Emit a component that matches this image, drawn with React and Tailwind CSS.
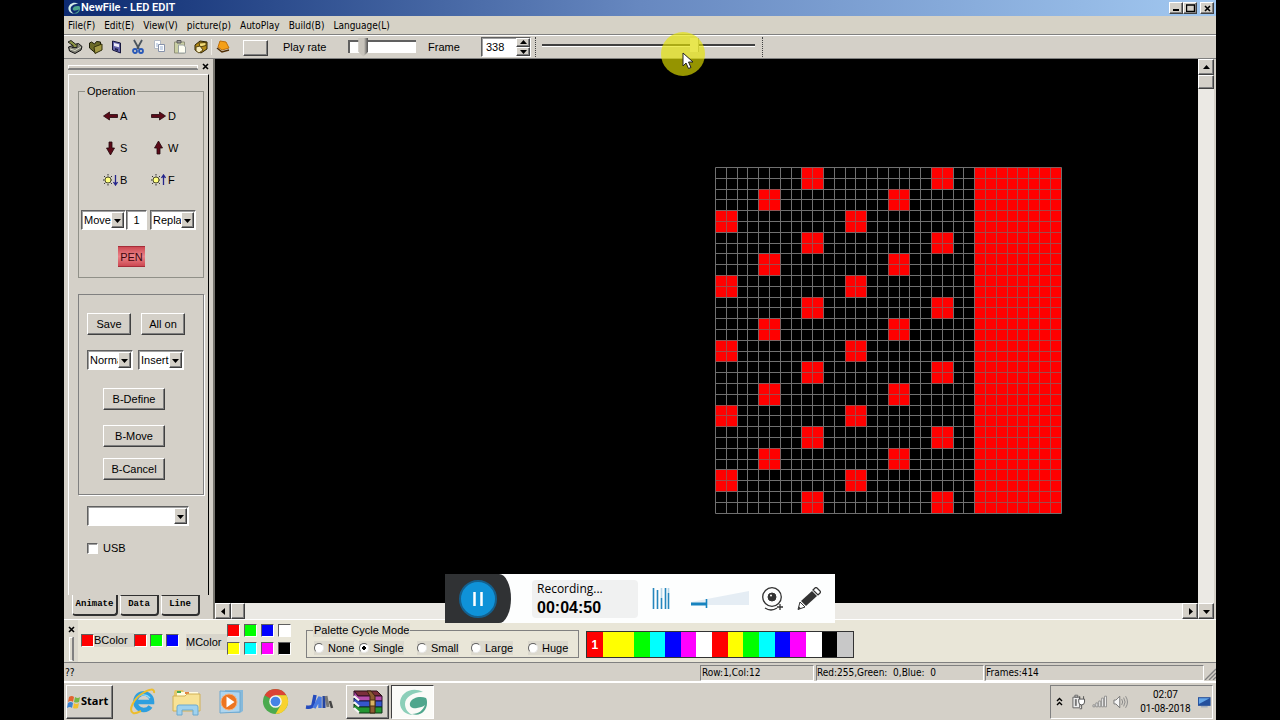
import { useState } from 'react';

const RAISED = 'bg-[#d4d0c8] border border-t-white border-l-white border-r-[#404040] border-b-[#404040] shadow-[inset_-1px_-1px_#808080]';
const SUNKEN = 'bg-white border border-t-[#606060] border-l-[#606060] border-r-white border-b-white shadow-[inset_1px_1px_#a0a0a0]';
const GROUP = 'border border-[#808080] shadow-[1px_1px_#ffffff]';
const ARIAL = "font-['Liberation_Sans',sans-serif]";
const TAHOMA = "font-['DejaVu_Sans_Condensed','DejaVu_Sans',sans-serif]";

const MENUS = ['File(F)', 'Edit(E)', 'View(V)', 'picture(p)', 'AutoPlay', 'Build(B)', 'Language(L)'];

const M_COLORS = [
  ['Mix red', 'bg-[#ff0000]'],
  ['Mix green', 'bg-[#00ff00]'],
  ['Mix blue', 'bg-[#0000ff]'],
  ['Mix white', 'bg-white'],
  ['Mix yellow', 'bg-[#ffff00]'],
  ['Mix cyan', 'bg-[#00ffff]'],
  ['Mix magenta', 'bg-[#ff00ff]'],
  ['Mix black', 'bg-black'],
];

const PALETTE = [
  'bg-[#ff0000]', 'bg-[#ffff00]', 'bg-[#ffff00]', 'bg-[#00ff00]', 'bg-[#00ffff]', 'bg-[#0000ff]',
  'bg-[#ff00ff]', 'bg-white', 'bg-[#ff0000]', 'bg-[#ffff00]', 'bg-[#00ff00]', 'bg-[#00ffff]',
  'bg-[#0000ff]', 'bg-[#ff00ff]', 'bg-white', 'bg-black', 'bg-[#c8c8c8]',
];

const CYCLE_MODES = ['None', 'Single', 'Small', 'Large', 'Huge'];

function Triangle({ dir = 'down' }) {
  const d = {
    down: 'M1 3h7l-3.5 4z',
    up: 'M1 6h7L4.5 2z',
    left: 'M6 1v7L2 4.5z',
    right: 'M3 1v7l4-3.5z',
  }[dir];
  return (
    <svg width="9" height="9" viewBox="0 0 9 9">
      <path d={d} fill="#000" />
    </svg>
  );
}

function Cross() {
  return (
    <svg width="7" height="7" viewBox="0 0 7 7">
      <path d="M1 1l5 5M6 1L1 6" stroke="#000" strokeWidth="1.6" />
    </svg>
  );
}

function Select({ label, options, className }) {
  return (
    <div className={`relative h-5 ${SUNKEN} ${className}`}>
      <select aria-label={label} className="block h-full w-full appearance-none overflow-hidden bg-transparent pl-0.5 pr-3 text-[11px] leading-4 text-black outline-none">
        {options.map((option) => (
          <option key={option}>{option}</option>
        ))}
      </select>
      <span className={`pointer-events-none absolute inset-y-px right-px flex w-[13px] items-center justify-center ${RAISED}`}>
        <Triangle />
      </span>
    </div>
  );
}

function PushButton({ children, className }) {
  return (
    <button type="button" className={`flex h-[22px] items-center justify-center text-[11px] ${RAISED} ${className}`}>
      {children}
    </button>
  );
}

/* ---------- toolbar icons ---------- */

const TOOL_ICONS = [
  {
    name: 'New',
    art: (
      <>
        <path d="M1.5 8l10-3.500 3.500 3-1 3.500-6 3.500-5.500-2.500z" fill="#85857a" stroke="#111" />
        <path d="M3 10l5 1.500 6-3.500" stroke="#dadac8" fill="none" />
        <path d="M1 3l3-1.500 5 4 1-1v4H5l1.500-1.500z" fill="#8b9344" stroke="#222" />
      </>
    ),
  },
  {
    name: 'Open',
    art: (
      <>
        <path d="M1.5 4l2-1 3 2 2-2.500 4 .5v3l-5 8-6-5z" fill="#6c6a28" stroke="#1c1c08" />
        <path d="M6 8l8-3v6l-7 3.500z" fill="#a39a45" stroke="#33310c" />
      </>
    ),
  },
  {
    name: 'Save file',
    art: (
      <>
        <path d="M3.5 2l8 2v10l-8-3z" fill="#6262a8" stroke="#16163c" />
        <path d="M5 4l5 1.200v3L5 7z" fill="#eceaf6" />
        <path d="M6 9l3 1v2L6 11z" fill="#20204d" />
      </>
    ),
  },
  {
    name: 'Cut',
    art: (
      <>
        <path d="M4 1l5 9M12 1L7 10" stroke="#4a545e" strokeWidth="1.8" />
        <circle cx="5" cy="12" r="2" fill="none" stroke="#2858b8" strokeWidth="1.8" />
        <circle cx="11" cy="12" r="2" fill="none" stroke="#2858b8" strokeWidth="1.8" />
      </>
    ),
  },
  {
    name: 'Copy',
    art: (
      <>
        <path d="M3.5 1.500h6v8h-6z" fill="#fff" stroke="#b4bac4" />
        <path d="M7.500 5.500h6v7h-6z" fill="#fff" stroke="#8792aa" />
        <path d="M9 8h3M9 10h3M5 5h2M5 7h2" stroke="#9cb3d5" />
      </>
    ),
  },
  {
    name: 'Paste',
    art: (
      <>
        <path d="M2.5 3h10v11h-10z" fill="#cbd0a4" stroke="#92927a" />
        <path d="M5 1.500h4v2.500H5z" fill="#999" stroke="#5b5b5b" />
        <path d="M6.500 6h5l2 2v6h-7z" fill="#fffff2" stroke="#9aa2a2" />
      </>
    ),
  },
  {
    name: 'Paste frame',
    art: (
      <>
        <path d="M2 6l5-4 7 1v7l-6 4-6-3z" fill="#b58b17" stroke="#2b2105" />
        <path d="M6 4l7-.5v3l-6 1.500z" fill="#f4dc78" stroke="#533f06" />
        <path d="M3 8l4-1 3 4-4 3-3-2z" fill="#f6ecc0" stroke="#5a4814" />
      </>
    ),
  },
];

/* ---------- taskbar icons ---------- */

function InternetExplorerIcon() {
  return (
    <svg width="28" height="28" viewBox="0 0 28 28" fill="none">
      <path d="M21.5 18.500a8.300 8.300 0 1 1 1.500-4.500H8" stroke="#2e9fdf" strokeWidth="4.600" />
      <path d="M21 10a8.500 8.500 0 0 0-14 1" stroke="#8fdcf8" strokeWidth="1.300" />
      <path d="M4 25c-5-3 1-15 10-20C20 1 26 0 25 5M4 25c3 1 6-1 8-2" stroke="#edbd2c" strokeWidth="2" />
    </svg>
  );
}

function ExplorerIcon() {
  return (
    <svg width="30" height="28" viewBox="0 0 30 28">
      <path d="M2 4l1-2h8l1 2h14v19H2z" fill="#e4c66a" />
      <path d="M5 4h21v6H5z" fill="#fffbe0" />
      <path d="M5 3h4v2H5z" fill="#45a851" />
      <path d="M13 4h4v2h-4z" fill="#e48440" />
      <path d="M1 8h12l2-2h13v17H1z" fill="#f7e296" stroke="#d1b054" />
      <path d="M5 27v-8q0-2 2-2h17q2 0 2 2v8h-5v-5h-11v5z" fill="#9fd2ee" stroke="#6aa9d0" />
    </svg>
  );
}

function MediaPlayerIcon() {
  return (
    <svg width="28" height="28" viewBox="0 0 28 28">
      <path d="M8 2h18v21l-3 2H8z" fill="#86b9da" />
      <path d="M3 3l20 1v20l-20 1z" fill="#aed5ee" stroke="#6fa9d0" />
      <circle cx="12" cy="14" r="8" fill="#ed7521" stroke="#f5b27d" />
      <path d="M9.500 8.500v11l8-5.500z" fill="#fff" />
    </svg>
  );
}

function ChromeIcon() {
  return (
    <svg width="27" height="27" viewBox="0 0 28 28">
      <circle cx="14" cy="14" r="13" fill="#4baa4e" />
      <path d="M14 14L2.700 7.500A13 13 0 0 1 25.300 7.500H14z" fill="#dc4335" />
      <path d="M14 7.500h11.300A13 13 0 0 1 14 27l5.500-9.500z" fill="#f8d22f" />
      <circle cx="14" cy="14" r="6.500" fill="#f5f5f0" />
      <circle cx="14" cy="14" r="5" fill="#4584e6" />
    </svg>
  );
}

function JmIcon() {
  return (
    <svg width="30" height="18" viewBox="0 0 30 18" fill="none">
      <path d="M11 2L9 12q-1 3-7 2" stroke="#254bbd" strokeWidth="3.500" />
      <path d="M10 15l6-11v11" stroke="#4879e0" strokeWidth="3.500" />
      <path d="M20 3v12" stroke="#2444a0" strokeWidth="3" />
      <path d="M22 3l2 11" stroke="#777" strokeWidth="3" />
      <path d="M26 8l2 7" stroke="#444" strokeWidth="2.500" />
    </svg>
  );
}

function WinrarIcon() {
  return (
    <svg width="30" height="24" viewBox="0 0 30 24">
      <path d="M1 1h23l5 5H5z" fill="#7b2f3c" stroke="#2b0f14" />
      <path d="M5 6h24v5H6l-5-5V1z" fill="#b64eab" stroke="#32102a" />
      <path d="M5 11h24v6H6l-5-5V8z" fill="#3656cd" stroke="#111c50" />
      <path d="M5 17h24v6H6l-5-5v-4z" fill="#239532" stroke="#0f3516" />
      <path d="M1 6l5 4.500M1 12l5 4.500M1 18l5 4.500" stroke="#f4f4f4" strokeWidth="2" />
      <path d="M14 1h4l4 5v17h-5V6z" fill="#8d5c32" stroke="#3b2411" />
      <path d="M17 10h5v6h-5z" fill="#d8b465" stroke="#4c3210" />
    </svg>
  );
}

function SwirlIcon({ size = 28, arc = '#8ccfb9' }) {
  return (
    <svg width={size} height={size} viewBox="0 0 28 28">
      <path d="M24 4C14-2 1 4 1 15c0 7 6 12 13 12-5-2-8-6-8-11C6 9 14 4 24 4z" fill={arc} />
      <path d="M27 10c-5-2-14-1-16 5-1 4 3 6 7 5 3-1 6-1 8-3-2 5-6 9-13 9 8 3 15-3 15-11 0-2 0-3-1-5z" fill="#4fa68d" />
    </svg>
  );
}

function WindowsFlag() {
  return (
    <svg width="14" height="14" viewBox="0 0 14 14">
      <path d="M2 2q3-2 5 0L6 7Q4 5 1 7z" fill="#e26430" />
      <path d="M8 2q3 2 5 0l-1 5q-3 1-5 0z" fill="#77b843" />
      <path d="M1 8q3-2 5 0l-1 5q-2-2-5 0z" fill="#3c82d1" />
      <path d="M7 8q2 2 5 0l-1 5q-3 1-5 0z" fill="#f2bf30" />
    </svg>
  );
}

/* ---------- window parts ---------- */

function TitleBar() {
  return (
    <header className="flex h-4 items-center bg-linear-to-r from-[#0d2a70] via-[#6788c0] to-[#a2c8f0] pl-1 pr-0.5">
      <SwirlIcon size={12} arc="#d6f0ea" />
      <h1 className="ml-px flex-1 text-[11px] font-semibold leading-4 text-white">NewFile - LED EDIT</h1>
      <button type="button" aria-label="Minimize" className={`flex h-3 w-3.5 items-end justify-center pb-0.5 ${RAISED}`}>
        <svg width="6" height="2"><path d="M0 0h6v2H0z" /></svg>
      </button>
      <button type="button" aria-label="Maximize" className={`flex h-3 w-3.5 items-center justify-center ${RAISED}`}>
        <svg width="9" height="8"><path d="M.5 1h8v6.500h-8z" fill="none" stroke="#000" strokeWidth="1.400" /></svg>
      </button>
      <button type="button" aria-label="Close" className={`ml-[3px] flex h-3 w-3.5 items-center justify-center ${RAISED}`}>
        <Cross />
      </button>
    </header>
  );
}

function MenuBar() {
  return (
    <nav className={`flex h-[19px] items-center gap-[9px] border-b border-[#808080] bg-[#d6d2c6] pl-1 pt-px text-[10px] ${TAHOMA}`}>
      {MENUS.map((menu) => (
        <button key={menu} type="button" className="leading-4">{menu}</button>
      ))}
    </nav>
  );
}

function ToolBar() {
  const [rate, setRate] = useState(10);
  const [frame, setFrame] = useState(338);

  return (
    <div className={`relative flex h-6 items-center border-t border-white border-b border-b-[#808080] bg-[#d4d0c8] text-[11px] ${ARIAL}`}>
      {TOOL_ICONS.map((tool) => (
        <button key={tool.name} type="button" aria-label={tool.name} className="flex w-[21px] justify-center">
          <svg width="16" height="16" viewBox="0 0 16 16">{tool.art}</svg>
        </button>
      ))}
      <span className="h-4 w-px bg-[#eeece6]" />
      <button type="button" aria-label="Erase" className="flex w-[21px] justify-center">
        <svg width="16" height="16" viewBox="0 0 16 16">
          <path d="M5 2l6 1 3 6-7 2-4-3z" fill="#f5a018" stroke="#c0700a" />
          <path d="M2 9l5 4 7-2" fill="none" stroke="#4e2d05" strokeWidth="1.500" />
        </svg>
      </button>
      <button type="button" aria-label="Play" className={`ml-2.5 mt-0.5 h-4 w-[25px] ${RAISED}`} />
      <label htmlFor="rate" className="ml-[15px] w-[65px]">Play rate</label>
      <input
        id="rate"
        type="range"
        min="0"
        max="68"
        value={rate}
        onChange={(e) => setRate(Number(e.target.value))}
        className="mb-0.5 h-5 w-[68px] appearance-none bg-transparent [&::-webkit-slider-runnable-track]:h-[13px] [&::-webkit-slider-runnable-track]:border-t-2 [&::-webkit-slider-runnable-track]:border-l-2 [&::-webkit-slider-runnable-track]:border-[#606060] [&::-webkit-slider-runnable-track]:bg-white [&::-webkit-slider-thumb]:-mt-1 [&::-webkit-slider-thumb]:h-[19px] [&::-webkit-slider-thumb]:w-2.5 [&::-webkit-slider-thumb]:appearance-none [&::-webkit-slider-thumb]:bg-linear-to-r [&::-webkit-slider-thumb]:from-[#c8c4bc] [&::-webkit-slider-thumb]:from-60% [&::-webkit-slider-thumb]:to-[#505050] [&::-webkit-slider-thumb]:[clip-path:polygon(0_0,100%_0,100%_75%,50%_100%,0_75%)]"
      />
      <label htmlFor="frame" className="ml-3 w-[53px]">Frame</label>
      <div className={`flex h-5 w-[50px] ${SUNKEN}`}>
        <input
          id="frame"
          type="text"
          value={frame}
          onChange={(e) => setFrame(Number(e.target.value) || 0)}
          className="min-w-0 flex-1 bg-transparent pl-1 outline-none"
        />
        <span className="flex w-3.5 flex-col">
          <button type="button" aria-label="Next frame" onClick={() => setFrame(frame + 1)} className={`flex flex-1 items-center justify-center overflow-hidden ${RAISED}`}>
            <Triangle dir="up" />
          </button>
          <button type="button" aria-label="Previous frame" onClick={() => setFrame(frame - 1)} className={`flex flex-1 items-center justify-center overflow-hidden ${RAISED}`}>
            <Triangle />
          </button>
        </span>
      </div>
      <span className="ml-1 h-5 border-l border-dotted border-[#404040]" />
      <input
        type="range"
        aria-label="Frame position"
        min="0"
        max="465"
        value={frame}
        onChange={(e) => setFrame(Number(e.target.value))}
        className="mb-1 ml-1.5 h-4 w-[213px] appearance-none bg-transparent [&::-webkit-slider-runnable-track]:h-[3px] [&::-webkit-slider-runnable-track]:border-b [&::-webkit-slider-runnable-track]:border-white [&::-webkit-slider-runnable-track]:bg-[#404040] [&::-webkit-slider-thumb]:-mt-1.5 [&::-webkit-slider-thumb]:h-3.5 [&::-webkit-slider-thumb]:w-[9px] [&::-webkit-slider-thumb]:appearance-none [&::-webkit-slider-thumb]:border-r [&::-webkit-slider-thumb]:border-[#a0a098] [&::-webkit-slider-thumb]:bg-[#eeece4]"
      />
      <span className="ml-[7px] h-5 border-l border-dotted border-[#404040]" />

      {/* click highlight and pointer */}
      <div className="pointer-events-none absolute -top-1 left-[597px] z-10 size-11 rounded-full bg-[#e6e400]/65">
        <svg className="absolute left-[21px] top-5" width="13" height="18" viewBox="0 0 13 18">
          <path d="M1 1v13l3-3 2.500 5.500 2.500-1L6.500 10H11z" fill="#fff" stroke="#222" />
        </svg>
      </div>
    </div>
  );
}

function Arrow({ dir }) {
  const d = {
    left: 'M0 7l6-4v2.500h8v3H6V11z',
    right: 'M14 7L8 3v2.500H0v3h8V11z',
    down: 'M7 14L3 7h2.500V1h3v6H11z',
    up: 'M7 0l4 7H8.500v6h-3V7H3z',
  }[dir];
  return (
    <svg width="15" height="14" viewBox="0 0 14 14">
      <path d={d} fill="#5c0a18" stroke="#22080c" strokeWidth=".8" />
    </svg>
  );
}

function Sun({ dir }) {
  return (
    <svg width="15" height="12" viewBox="0 0 15 12">
      <path d="M5 0v12M0 6h10M1 2l8 8M9 2l-8 8" stroke="#333" strokeWidth="1" strokeDasharray="1.500 1" />
      <circle cx="5" cy="6" r="3" fill="#ffff80" stroke="#50502c" />
      <path d={dir === 'down' ? 'M12.500 1v9M10.500 8l2 3 2-3' : 'M12.500 11V2M10.500 4l2-3 2 3'} stroke="#25258c" strokeWidth="1.300" fill="none" />
    </svg>
  );
}

const OPERATIONS = [
  ['A', <Arrow dir="left" />],
  ['D', <Arrow dir="right" />],
  ['S', <Arrow dir="down" />],
  ['W', <Arrow dir="up" />],
  ['B', <Sun dir="down" />],
  ['F', <Sun dir="up" />],
];

function SidePanel() {
  return (
    <aside className={`flex w-[151px] shrink-0 flex-col border-r-2 border-[#77756f] bg-[#d4d0c8] text-[11px] ${ARIAL}`}>
      <div className="flex h-[15px] items-center gap-1 pl-1">
        <span className="h-1 w-[130px] border border-white border-b-[#808080] shadow-[0_1px_#808080]" />
        <button type="button" aria-label="Close panel"><Cross /></button>
      </div>

      <div className="ml-1 mr-1 flex-1 border-t border-l border-r border-t-white border-l-white border-r-black">
        <fieldset className="ml-[9px] mt-[9px] w-[126px] border border-[#909088] pb-2.5">
          <legend className="ml-1.5 px-0.5 leading-[14px]">Operation</legend>
          <div className="grid grid-cols-[48px_48px] pl-6 pt-0.5">
            {OPERATIONS.map(([key, icon]) => (
              <button key={key} type="button" className="flex h-8 items-center gap-0.5">
                {icon}
                {key}
              </button>
            ))}
          </div>
          <div className="mt-3.5 flex pl-0.5">
            <Select label="Operation type" options={['Move', 'Clear']} className="w-[45px]" />
            <input aria-label="Step" defaultValue="1" className={`h-5 w-[21px] text-center ${SUNKEN}`} />
            <Select label="Write mode" options={['Replace', 'Overlay']} className="ml-[3px] w-[46px]" />
          </div>
          <button type="button" className="ml-[39px] mt-4 block h-[21px] w-[27px] border-y border-[#a52c38] bg-linear-to-b from-[#cc4852] via-[#ec8289] to-[#cc4852] text-center leading-[18px] text-[#40060c]">
            PEN
          </button>
        </fieldset>

        <div className={`ml-[9px] mt-4 w-[126px] pb-3.5 pl-2 pt-[18px] ${GROUP}`}>
          <div className="flex gap-2.5">
            <PushButton className="w-11">Save</PushButton>
            <PushButton className="w-11">All on</PushButton>
          </div>
          <div className="mt-[15px] flex gap-[5px]">
            <Select label="Draw mode" options={['Normal', 'Mirror']} className="w-[46px]" />
            <Select label="Frame mode" options={['Insert', 'Append']} className="w-[46px]" />
          </div>
          <div className="ml-4 mt-[18px] flex w-[62px] flex-col">
            <PushButton>B-Define</PushButton>
            <PushButton className="mt-[15px]">B-Move</PushButton>
            <PushButton className="mt-[11px]">B-Cancel</PushButton>
          </div>
        </div>

        <Select label="Port" options={['']} className="ml-[18px] mt-[11px] w-[102px]" />
        <label className="ml-[18px] mt-3.5 flex items-center gap-[5px]">
          <input type="checkbox" className={`size-[11px] appearance-none ${SUNKEN}`} />
          USB
        </label>
      </div>

      <div className="flex h-6 items-start gap-0.5 pl-2 font-['Liberation_Mono',monospace] text-[9px]">
        <button type="button" className="h-[21px] w-[46px] rounded-b border-r-2 border-b-2 border-l border-[#303030] border-l-white font-bold">Animate</button>
        <button type="button" className="h-[21px] w-[39px] rounded-b border-t border-r-2 border-b-2 border-l border-[#303030] border-l-white font-bold">Data</button>
        <button type="button" className="h-[21px] w-[39px] rounded-b border-t border-r-2 border-b-2 border-l border-[#303030] border-l-white font-bold">Line</button>
      </div>
    </aside>
  );
}

// 32x32 dots; the last 8 columns are fully lit, the rest carries 2x2 blocks on a diagonal
function LedGrid() {
  const blocks = [];
  for (let row = 0; row < 16; row++) {
    const first = 4 - (row % 3) * 2;
    blocks.push([first, row], [first + 6, row]);
  }
  const lines = Array.from({ length: 33 }, (_, i) => Math.round(i * 10.8));
  const lit = (
    <>
      {blocks.map(([col, row]) => (
        <rect key={`${col}-${row}`} x={col * 21.6} y={row * 21.6} width="21.6" height="21.6" />
      ))}
      <rect x="259.2" y="0" width="86.4" height="345.6" />
    </>
  );

  return (
    <svg width="347" height="347" viewBox="-0.5 -0.5 347 347">
      <g fill="#ff0000">{lit}</g>
      {lines.map((p) => (
        <path key={p} d={`M${p} 0V346M0 ${p}H346`} stroke="#707070" strokeWidth="1" />
      ))}
      {/* lit dots glow through the grid lines */}
      <g fill="#ff0000" opacity=".35">{lit}</g>
    </svg>
  );
}

function ScrollButton({ dir, label }) {
  return (
    <button type="button" aria-label={label} className={`flex size-4 shrink-0 items-center justify-center ${RAISED}`}>
      <Triangle dir={dir} />
    </button>
  );
}

function Workspace() {
  return (
    <main className="flex min-w-0 flex-1 border-r-2 border-[#d4d0c8] bg-[#ebe9e4]">
      <div className="flex min-w-0 flex-1 flex-col">
        <div className="flex-1 bg-black pl-[500px] pt-[108px]">
          <LedGrid />
        </div>
        <div className="flex h-4">
          <ScrollButton dir="left" label="Scroll left" />
          <span className={`w-3.5 ${RAISED}`} />
          <span className="flex-1" />
          <ScrollButton dir="right" label="Scroll right" />
        </div>
      </div>
      <div className="flex w-4 flex-col">
        <ScrollButton dir="up" label="Scroll up" />
        <span className={`h-3.5 ${RAISED}`} />
        <span className="flex-1" />
        <ScrollButton dir="down" label="Scroll down" />
      </div>
    </main>
  );
}

function Swatch({ label, color }) {
  return <button type="button" aria-label={label} className={`size-[13px] border border-t-[#606060] border-l-[#606060] border-r-white border-b-white ${color}`} />;
}

function PaletteBar() {
  const [mode, setMode] = useState('Single');

  return (
    <section className={`flex h-[43px] items-start border-t border-white bg-[#e9e6d8] text-[11px] ${ARIAL}`}>
      <div className="flex h-full w-3.5 flex-col items-center gap-1 bg-[#dcd9ce] pt-1.5">
        <button type="button" aria-label="Close palette" className="flex"><Cross /></button>
        <span className="h-6 w-1 border border-white border-r-[#808080] shadow-[1px_0_#808080]" />
      </div>
      <div className="ml-[3px] mt-[13px] flex items-center">
        <Swatch label="Background color" color="bg-[#ff0000]" />
        <span className="w-10 bg-[#d8d5cb] leading-[14px]">BColor</span>
        <div className="flex gap-[3px]">
          <Swatch label="Red" color="bg-[#ff0000]" />
          <Swatch label="Green" color="bg-[#00ff00]" />
          <Swatch label="Blue" color="bg-[#0000ff]" />
        </div>
      </div>
      <span className="ml-[7px] mt-3.5 w-[41px] bg-[#d8d5cb] leading-4">MColor</span>
      <div className="mt-1 grid grid-cols-4 gap-x-1 gap-y-[5px]">
        {M_COLORS.map(([name, color]) => (
          <Swatch key={name} label={name} color={color} />
        ))}
      </div>
      <fieldset className="ml-[15px] mt-[3px] flex h-[35px] w-[273px] border border-[#808080]">
        <legend className="ml-1.5 bg-[#dfdccf] px-px leading-[14px]">Palette Cycle Mode</legend>
        <div className="grid grid-cols-[45px_58px_54px_57px_auto] items-center pl-[7px] pt-0.5">
          {CYCLE_MODES.map((name) => (
            <label key={name} className="flex items-center gap-1 justify-self-start bg-[#dcd9ce] leading-[14px]">
              <input
                type="radio"
                name="cycle"
                checked={mode === name}
                onChange={() => setMode(name)}
                className="size-2.5 appearance-none rounded-full border border-t-[#606060] border-l-[#606060] border-r-[#e8e8e8] border-b-[#e8e8e8] bg-white checked:bg-[radial-gradient(circle,#000_2px,#fff_2px)]"
              />
              {name}
            </label>
          ))}
        </div>
      </fieldset>
      <div className="ml-[7px] mt-[11px] flex h-[27px] w-[268px] border border-[#333333]">
        {PALETTE.map((color, i) => (
          <button key={i} type="button" aria-label={`Palette ${i + 1}`} className={`flex-1 text-center text-[12px] font-bold text-white ${color}`}>
            {i === 0 ? '1' : ''}
          </button>
        ))}
      </div>
    </section>
  );
}

function StatusBar() {
  return (
    <footer className={`flex h-5 items-center border-t border-b border-t-[#808080] border-b-white bg-[#d4d0c8] pt-0.5 text-[10px] leading-[14px] ${TAHOMA}`}>
      <span className="flex-1 pl-px">??</span>
      <span className="w-[114px] border border-[#808080] border-r-white border-b-white pl-px">Row:1,Col:12</span>
      <span className="ml-0.5 w-[168px] whitespace-pre border border-[#808080] border-r-white border-b-white">Red:255,Green:  0,Blue:  0</span>
      <span className="ml-px w-[219px] border border-[#808080] border-r-white border-b-white">Frames:414</span>
      <svg width="12" height="14" viewBox="0 0 12 14">
        <path d="M1 14L12 3M5 14l7-7M9 14l3-3" stroke="#808080" strokeWidth="1.400" />
      </svg>
    </footer>
  );
}

function TaskBar() {
  return (
    <div className="flex h-[38px] items-center border-t border-white bg-[#d4d0c8] pl-0.5 pr-[3px]">
      <button type="button" className={`flex h-[34px] w-[47px] items-center text-[11px] font-bold ${RAISED}`}>
        <WindowsFlag />
        <span className="font-['Open_Sans',sans-serif]">Start</span>
      </button>
      <div className="ml-2 flex">
        <button type="button" aria-label="Internet Explorer" className="flex w-11 justify-center"><InternetExplorerIcon /></button>
        <button type="button" aria-label="Windows Explorer" className="flex w-11 justify-center"><ExplorerIcon /></button>
        <button type="button" aria-label="Media Player" className="flex w-11 justify-center"><MediaPlayerIcon /></button>
        <button type="button" aria-label="Chrome" className="flex w-11 items-center justify-center"><ChromeIcon /></button>
        <button type="button" aria-label="JM" className="flex w-11 items-center justify-center"><JmIcon /></button>
      </div>
      <button type="button" aria-label="WinRAR" className={`ml-[5px] flex h-[34px] w-[43px] items-center justify-center ${RAISED}`}>
        <WinrarIcon />
      </button>
      <button type="button" aria-label="LED Edit" className="ml-0.5 flex h-[34px] w-[43px] items-center justify-center border border-[#404040] border-r-white border-b-white bg-[#fbfbf8]">
        <SwirlIcon />
      </button>
      <span className="flex-1" />
      <div className="flex h-[34px] w-[163px] items-center border border-[#808080] border-r-white border-b-white pl-[5px]">
        <button type="button" aria-label="Show hidden icons">
          <svg width="7" height="9" viewBox="0 0 7 9"><path d="M1 4l2.500-2.500L6 4M1 8l2.500-2.500L6 8" fill="none" stroke="#000" strokeWidth="1.400" /></svg>
        </button>
        <svg className="ml-2" width="15" height="16" viewBox="0 0 15 16">
          <path d="M2 3h7v11H2zM4 1h3v2H4z" fill="#eee" stroke="#666" />
          <path d="M4 5h2v7H4z" fill="#777" />
          <path d="M8 5h6v3q0 3-3 3t-3-3zM9 5V2M13 5V2M11 11v4H9" fill="#fff" stroke="#555" />
        </svg>
        <svg className="ml-1.5" width="16" height="13" viewBox="0 0 16 13">
          <path d="M1 10h2v2H1zM4 8h2v4H4zM7 6h2v6H7zM10 3h2v9h-2zM13 1h2v11h-2z" fill="#f2f2f2" stroke="#808080" strokeWidth=".8" />
        </svg>
        <svg className="ml-1.5" width="16" height="14" viewBox="0 0 16 14">
          <path d="M1 5h2l4-4v12L3 9H1z" fill="#f5f5f5" stroke="#777" />
          <path d="M9 4q2 3 0 6M11 2.500q3 4.500 0 9M13 1q4 6 0 12" fill="none" stroke="#8a8a8a" />
        </svg>
        <time className="ml-2 w-[60px] text-center text-[10px] leading-[14px]">
          02:07
          <br />
          01-08-2018
        </time>
        <svg className="ml-1" width="14" height="12" viewBox="0 0 14 12">
          <path d="M0 1h13v9H0z" fill="#244f9c" />
          <path d="M1 2h11L1 8z" fill="#65a6e8" />
          <path d="M3 11h7" stroke="#8a9cb5" />
        </svg>
      </div>
    </div>
  );
}

function Recorder() {
  return (
    <div className="absolute bottom-[97px] left-[381px] z-10 flex h-[49px] w-[390px] items-center bg-[#fdfefe]">
      <div className="flex h-full w-[66px] items-center bg-[#303234] pl-3.5 [border-radius:0_12px_12px_0/0_50%_50%_0]">
        <button type="button" aria-label="Pause" className="flex size-[38px] items-center justify-center rounded-full border-2 border-[#14608e] bg-[#0f92d8]">
          <svg width="12" height="16" viewBox="0 0 12 16"><path d="M2.500 1v14M9.500 1v14" stroke="#fff" strokeWidth="2.500" /></svg>
        </button>
      </div>
      <div className="ml-[21px] flex h-[38px] w-[106px] flex-col justify-center rounded bg-[#f0f1f1] pl-[5px]">
        <span className="font-['Open_Sans',sans-serif] text-[12px] leading-[18px]">Recording...</span>
        <span className="font-['Liberation_Sans',sans-serif] text-[16px] font-bold leading-5 text-black">00:04:50</span>
      </div>
      <svg className="ml-3.5" width="18" height="24" viewBox="0 0 18 24">
        <path d="M1.500 1v21M5.500 3v19M9.500 11v11M13.500 1v21M16.500 6v16" stroke="#2686bd" strokeWidth="1.600" />
        <path d="M9.500 1v10M16.500 1v5" stroke="#b5d5e8" strokeWidth="1.600" />
      </svg>
      <svg className="ml-5" width="60" height="18" viewBox="0 0 60 18">
        <path d="M1 12L59 1v14H1z" fill="#e5edf4" />
        <path d="M1 14h15" stroke="#1783bf" strokeWidth="3" />
        <path d="M16.500 9v9" stroke="#1783bf" strokeWidth="1.600" />
      </svg>
      <button type="button" aria-label="Webcam" className="ml-[11px]">
        <svg width="24" height="26" viewBox="0 0 24 26" fill="none" stroke="#333">
          <circle cx="11" cy="11" r="9.300" strokeWidth="1.300" />
          <circle cx="11" cy="11" r="4" fill="#333" />
          <circle cx="10" cy="9.500" r="1" fill="#fff" stroke="none" />
          <path d="M4 22q6 4 12 0M16 21h6M19 18v6" strokeWidth="1.300" />
        </svg>
      </button>
      <button type="button" aria-label="Draw" className="ml-3">
        <svg width="24" height="24" viewBox="0 0 24 24" fill="#333">
          <path d="M4 14L15 4l5 5L9 19z" />
          <path d="M16 3l2-2q1-1 2 0l3 3q1 1 0 2l-2 2z" fill="none" stroke="#333" strokeWidth="1.200" />
          <path d="M3 15l5 5-7 2.500z" fill="none" stroke="#333" />
          <path d="M1 22.500l1-3 2 2z" />
        </svg>
      </button>
    </div>
  );
}

export default function App() {
  return (
    <div className="min-h-screen bg-black px-16 font-['Roboto',sans-serif] text-black">
      <div className="relative flex min-h-screen flex-col">
        <TitleBar />
        <MenuBar />
        <ToolBar />
        <div className="flex flex-1">
          <SidePanel />
          <Workspace />
        </div>
        <PaletteBar />
        <StatusBar />
        <TaskBar />
        <Recorder />
      </div>
    </div>
  );
}
